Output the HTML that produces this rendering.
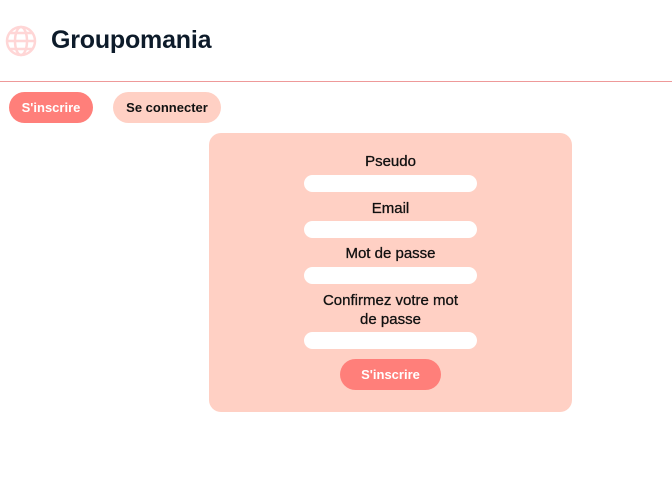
<!DOCTYPE html>
<html><head><style>
body{margin:0;width:672px;height:498px;background:#fff;font-family:"Liberation Sans",sans-serif;position:relative;overflow:hidden}
.a{position:absolute}
.btn{position:absolute;border-radius:16px;font-weight:bold;font-size:13px;text-align:center;line-height:31px;height:31px}
.lbl{position:absolute;left:294px;width:193px;text-align:center;font-size:15px;color:#111;line-height:19px;-webkit-text-stroke:0.3px #111}
.in{position:absolute;left:304px;width:173px;height:17px;background:#fff;border-radius:9px}
</style></head><body>
<svg class="a" style="left:5px;top:25px" width="32" height="32" viewBox="0 0 32 32" fill="none" stroke="#ffd6d6" stroke-width="2.5">
<circle cx="16" cy="16" r="14"/><ellipse cx="16" cy="16" rx="6" ry="14"/><line x1="2" y1="16" x2="30" y2="16"/><path d="M5 8h22M5 24h22"/></svg>
<div class="a" style="left:51px;top:26px;font-size:25px;letter-spacing:-0.2px;font-weight:bold;color:#0d1b2a">Groupomania</div>
<div class="a" style="left:0;top:81px;width:672px;height:1px;background:#e99"></div>
<div class="btn" style="left:9px;top:92px;width:84px;background:#ff7f7a;color:#fff">S'inscrire</div>
<div class="btn" style="left:113px;top:92px;width:108px;background:#ffd0c4;color:#111">Se connecter</div>
<div class="a" style="left:209px;top:133px;width:363px;height:279px;background:#ffd0c4;border-radius:12px"></div>
<div class="lbl" style="top:152px">Pseudo</div>
<div class="in" style="top:175px"></div>
<div class="lbl" style="top:199px">Email</div>
<div class="in" style="top:221px"></div>
<div class="lbl" style="top:244px">Mot de passe</div>
<div class="in" style="top:267px"></div>
<div class="lbl" style="top:291px">Confirmez votre mot<br>de passe</div>
<div class="in" style="top:332px"></div>
<div class="btn" style="left:340px;top:359px;width:101px;background:#ff7f7a;color:#fff">S'inscrire</div>
</body></html>
